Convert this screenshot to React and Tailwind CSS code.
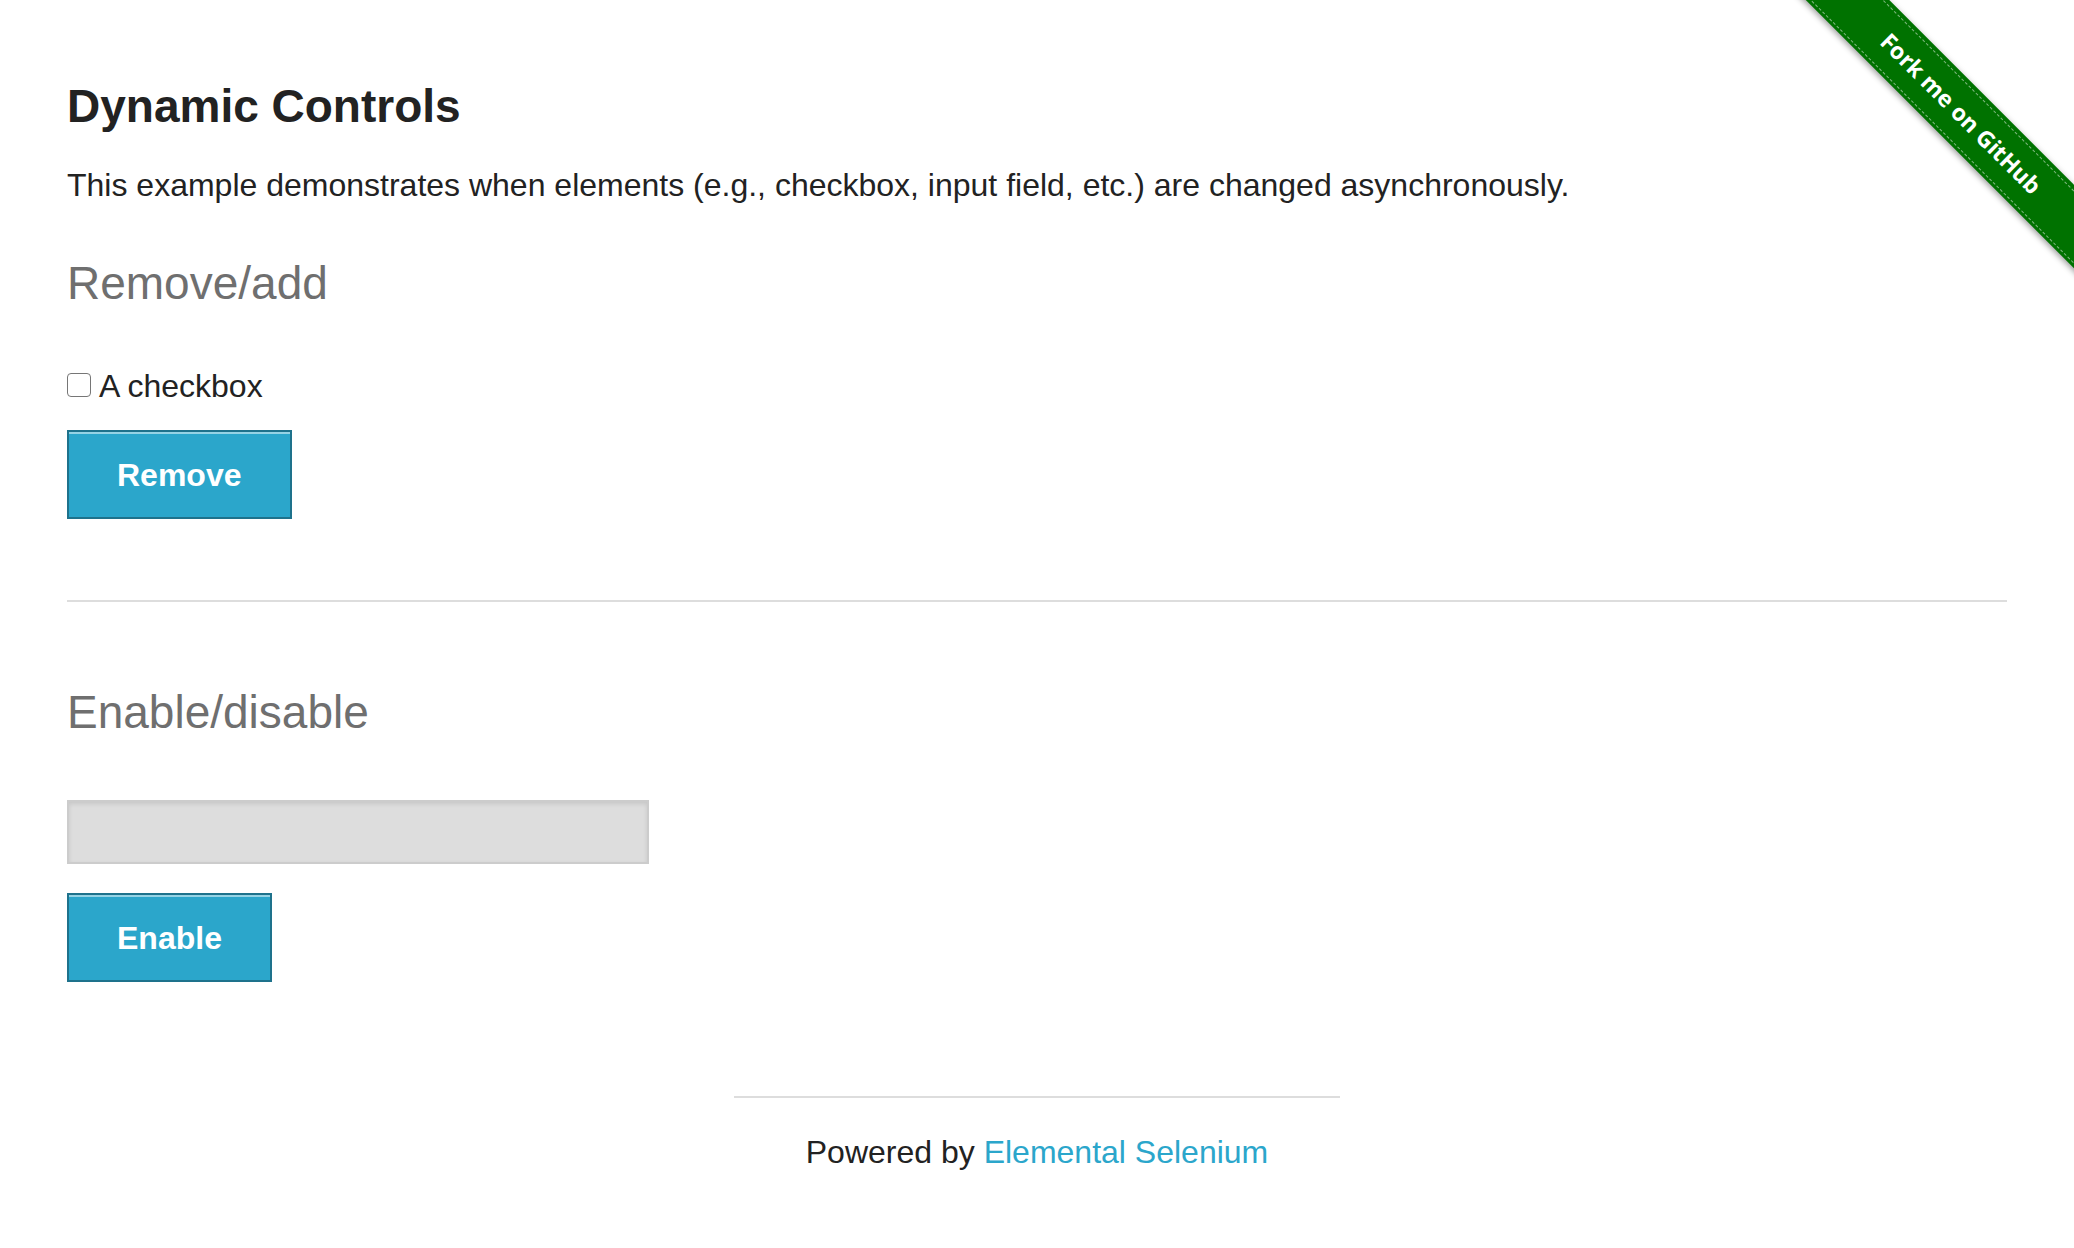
import React from 'react';

// Forked-repo ribbon in the top right corner
function GithubRibbon() {
  return (
    <div className="absolute top-0 right-0 w-[300px] h-[300px] overflow-hidden pointer-events-none">
      <div className="absolute left-[-23px] top-[84px] w-[420px] h-[59px] rotate-45 bg-[#007200] shadow-[0_2px_6px_rgba(0,0,0,0.4)] flex items-center">
        <div className="w-full h-[52px] border-y border-dashed border-white/50 flex items-center justify-center">
          <span className="font-['Open_Sans',sans-serif] font-bold text-[23px] text-white leading-none">Fork me on GitHub</span>
        </div>
      </div>
    </div>
  );
}

function BlueButton({ children }) {
  return (
    <button
      type="button"
      className="h-[89px] px-12 flex items-center justify-center bg-[#2ba6cb] border-2 border-[#1e728c] shadow-[inset_0_2px_0_rgba(255,255,255,0.5)] text-white font-bold text-[32px] leading-[40px]"
    >
      {children}
    </button>
  );
}

export default function App() {
  return (
    <div className="relative min-h-[1248px] bg-white font-['Liberation_Sans',Arial,sans-serif] text-[#222]">
      <GithubRibbon />

      <div className="px-[67px] pt-[79px]">
        <h3 className="text-[46px] leading-[54px] font-bold text-[#222]">Dynamic Controls</h3>
        <p className="mt-[32px] text-[32px] leading-[40px]">
          This example demonstrates when elements (e.g., checkbox, input field, etc.) are changed asynchronously.
        </p>

        {/* Remove / add */}
        <h4 className="mt-[51px] text-[46px] leading-[54px] text-[#6f6f6f]">Remove/add</h4>
        <div className="mt-[56px] flex items-start gap-2">
          <span className="mt-[7px] w-6 h-6 rounded-[4px] border border-[#767676] bg-white" />
          <span className="text-[32px] leading-[40px]">A checkbox</span>
        </div>
        <div className="mt-[24px] flex">
          <BlueButton>Remove</BlueButton>
        </div>

        <hr className="mt-[81px] border-0 h-[2px] bg-[#dddddd]" />

        {/* Enable / disable */}
        <h4 className="mt-[83px] text-[46px] leading-[54px] text-[#6f6f6f]">Enable/disable</h4>
        <div className="mt-[61px] w-[582px] h-[64px] bg-[#dddddd] border-2 border-[#cccccc] shadow-[inset_0_2px_4px_rgba(0,0,0,0.1)]" />
        <div className="mt-[29px] flex">
          <BlueButton>Enable</BlueButton>
        </div>
      </div>

      {/* Footer */}
      <div className="mt-[114px] flex flex-col items-center">
        <hr className="w-[606px] border-0 h-[2px] bg-[#dddddd]" />
        <p className="mt-[34px] text-[32px] leading-[40px]">
          Powered by <a className="text-[#2ba6cb]" href="#">Elemental Selenium</a>
        </p>
      </div>
    </div>
  );
}
